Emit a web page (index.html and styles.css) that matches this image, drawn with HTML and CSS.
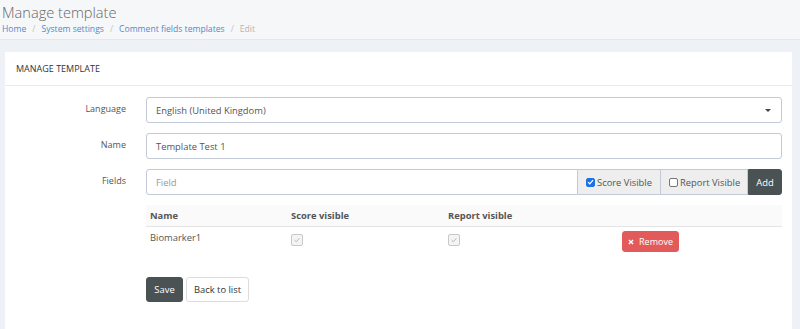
FILE: index.html
```html
<!DOCTYPE html>
<html>
<head>
<meta charset="utf-8">
<link rel="stylesheet" href="styles.css">
</head>
<body>
<div class="page-head">
  <h1 class="page-title">Manage template</h1>
  <ul class="breadcrumb">
    <li><a href="#">Home</a></li>
    <li class="sep">/</li>
    <li><a href="#">System settings</a></li>
    <li class="sep">/</li>
    <li><a href="#">Comment fields templates</a></li>
    <li class="sep">/</li>
    <li class="active">Edit</li>
  </ul>
</div>
<div class="content">
  <div class="card">
    <div class="card-title">MANAGE TEMPLATE</div>
    <div class="form">
      <div class="row">
        <label class="label">Language</label>
        <div class="control select">
          <span>English (United Kingdom)</span>
          <span class="caret"></span>
        </div>
      </div>
      <div class="row">
        <label class="label">Name</label>
        <div class="control">Template Test 1</div>
      </div>
      <div class="row">
        <label class="label">Fields</label>
        <div class="group">
          <div class="control field placeholder">Field</div>
          <div class="addon addon-score"><span class="cb checked"><svg viewBox="0 0 10 10" width="8" height="8"><path d="M1.5 5.2 L4 7.6 L8.6 2.2" fill="none" stroke="#fff" stroke-width="1.8"/></svg></span>Score Visible</div>
          <div class="addon addon-report"><span class="cb"></span>Report Visible</div>
          <button class="btn btn-dark btn-add">Add</button>
        </div>
      </div>
      <div class="row">
        <div></div>
        <div class="tablewrap">
          <div class="thead">
            <div class="c1">Name</div>
            <div class="c2">Score visible</div>
            <div class="c3">Report visible</div>
            <div class="c4"></div>
          </div>
          <div class="trow">
            <div class="c1">Biomarker1</div>
            <div class="c2"><span class="cb disabled"><svg viewBox="0 0 10 10" width="8" height="8"><path d="M2 5.2 L4.2 7.2 L8 2.8" fill="none" stroke="#aaa" stroke-width="1"/></svg></span></div>
            <div class="c3"><span class="cb disabled"><svg viewBox="0 0 10 10" width="8" height="8"><path d="M2 5.2 L4.2 7.2 L8 2.8" fill="none" stroke="#aaa" stroke-width="1"/></svg></span></div>
            <div class="c4"><button class="btn btn-red"><svg viewBox="0 0 10 10" width="6" height="6"><path d="M1.5 1.5 L8.5 8.5 M8.5 1.5 L1.5 8.5" stroke="#fff" stroke-width="2.4"/></svg>Remove</button></div>
          </div>
        </div>
      </div>
      <div class="row actions-row">
        <div></div>
        <div class="actions">
          <button class="btn btn-dark btn-save">Save</button>
          <button class="btn btn-default">Back to list</button>
        </div>
      </div>
    </div>
  </div>
</div>
</body>
</html>
```
FILE: styles.css
```css
* { box-sizing: border-box; }
html, body { margin: 0; padding: 0; }
body {
  background: #eef1f5;
  font-family: "Open Sans", "Liberation Sans", sans-serif;
  font-size: 9.4px;
  color: #333;
  height: 329px;
  overflow: hidden;
}
.page-head {
  background: #f6f7f9;
  border-bottom: 1px solid #e4e7ec;
  height: 40px;
  padding: 0 2px;
}
.page-title {
  margin: 0;
  padding-top: 1px;
  font-size: 14.6px;
  font-weight: 300;
  color: #666;
  line-height: 22px;
}
.breadcrumb {
  list-style: none;
  margin: 0;
  padding: 0;
  display: flex;
  gap: 6px;
  line-height: 12px;
  font-size: 8.6px;
}
.breadcrumb a { color: #4f8bc9; text-decoration: none; }
.breadcrumb .sep { color: #c5c5c5; }
.breadcrumb .active { color: #b5b5b5; }
.content {
  padding: 12px 8px 0 5px;
}
.card {
  background: #fff;
  height: 277px;
}
.card-title {
  height: 34px;
  line-height: 34px;
  padding-left: 11px;
  border-bottom: 1px solid #e7ecf1;
  font-size: 9px;
  color: #333;
}
.form {
  padding: 11px 10px 0 0;
  display: flex;
  flex-direction: column;
  gap: 10px;
}
.row {
  display: grid;
  grid-template-columns: 121px 1fr;
  column-gap: 20px;
}
.label {
  text-align: right;
  color: #555;
  padding-top: 5px;
  font-size: 9px;
}
.control {
  height: 26px;
  border: 1px solid #c2cad8;
  border-radius: 3px;
  padding: 0 9px;
  display: flex;
  align-items: center;
  color: #555;
}
.select { justify-content: space-between; }
.caret {
  width: 0; height: 0;
  border-left: 3px solid transparent;
  border-right: 3px solid transparent;
  border-top: 3.5px solid #444;
  margin-right: 1px;
}
.group {
  display: flex;
  height: 26px;
}
.group .field {
  flex: 1;
  border-radius: 3px 0 0 3px;
}
.placeholder { color: #999; }
.addon {
  background: #eee;
  border: 1px solid #c2cad8;
  border-left: 0;
  display: flex;
  align-items: center;
  padding: 0 0 0 8px;
  color: #555;
  gap: 2px;
  white-space: nowrap;
  flex: none;
}
.addon-score { width: 83px; }
.addon-report { width: 87px; }
.cb {
  display: inline-flex;
  align-items: center;
  justify-content: center;
  width: 9px; height: 9px;
  border: 1px solid #767676;
  border-radius: 2px;
  background: #fff;
  flex: none;
}
.cb.checked { background: #1a73e8; border-color: #1a73e8; }
.cb.disabled {
  width: 12px; height: 12px;
  border: 1px solid #c8c8c8;
  background: #f4f4f4;
}
.btn {
  font-family: inherit;
  font-size: 9.4px;
  border: 1px solid transparent;
  border-radius: 3px;
  cursor: pointer;
  padding: 0;
}
.btn-dark { background: #4a5254; color: #fff; border-color: #4a5254; }
.btn-add {
  width: 34px;
  flex: none;
  border-radius: 0 3px 3px 0;
}
.thead, .trow {
  display: grid;
  grid-template-columns: 141px 157px 174px 1fr;
}
.thead {
  background: #fafafa;
  border-bottom: 1px solid #e4e4e4;
  height: 22px;
  align-items: center;
  font-weight: 700;
  color: #555;
}
.thead > div, .trow > div { padding-left: 4px; }
.trow {
  height: 30px;
  color: #555;
  padding-top: 4px;
}
.trow .c2, .trow .c3 { padding-top: 3px; }
.btn-red {
  background: #e35a5a;
  border-color: #e35a5a;
  color: #fff;
  width: 57px;
  height: 21px;
  display: inline-flex;
  align-items: center;
  justify-content: center;
  gap: 5px;
  font-size: 9px;
}
.actions-row { margin-top: 10px; }
.actions { display: flex; gap: 3px; }
.btn-save { width: 37px; height: 25px; }
.btn-default {
  background: #fff;
  border-color: #ddd;
  color: #333;
  width: 63px;
  height: 25px;
}
```
